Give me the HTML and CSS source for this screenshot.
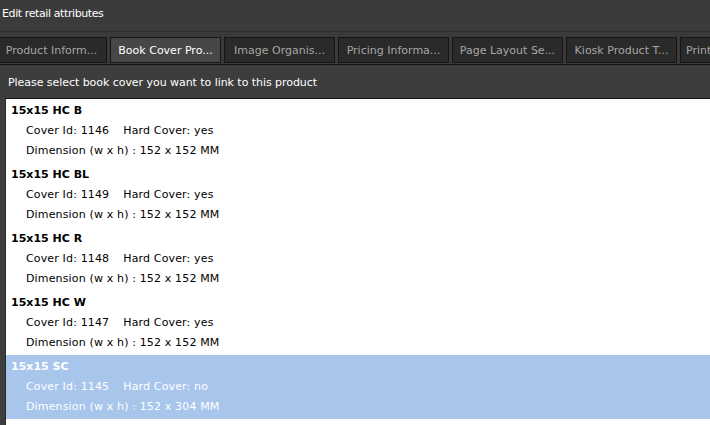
FILE: index.html
```html
<!DOCTYPE html>
<html lang="en">
<head>
    <meta charset="UTF-8">
    <title>Edit retail attributes</title>
    <link rel="stylesheet" href="styles.css">
</head>
<body>

    <!-- Window title -->
    <div class="titlebar">Edit retail attributes</div>

    <!-- Tabs -->
    <div class="tabs">
        <div class="tab">Product Inform...</div>
        <div class="tab active">Book Cover Pro...</div>
        <div class="tab">Image Organis...</div>
        <div class="tab">Pricing Informa...</div>
        <div class="tab">Page Layout Se...</div>
        <div class="tab">Kiosk Product T...</div>
        <div class="tab">Print Settings...</div>
    </div>

    <!-- Content -->
    <div class="content">
        <p class="hint">Please select book cover you want to link to this product</p>
        <div class="cover-list">
            <div class="cover">
                <div class="cover-name">15x15 HC B</div>
                <div class="cover-line">Cover Id: 1146<span class="gap"></span>Hard Cover: yes</div>
                <div class="cover-line">Dimension (w x h) : 152 x 152 MM</div>
            </div>
            <div class="cover">
                <div class="cover-name">15x15 HC BL</div>
                <div class="cover-line">Cover Id: 1149<span class="gap"></span>Hard Cover: yes</div>
                <div class="cover-line">Dimension (w x h) : 152 x 152 MM</div>
            </div>
            <div class="cover">
                <div class="cover-name">15x15 HC R</div>
                <div class="cover-line">Cover Id: 1148<span class="gap"></span>Hard Cover: yes</div>
                <div class="cover-line">Dimension (w x h) : 152 x 152 MM</div>
            </div>
            <div class="cover">
                <div class="cover-name">15x15 HC W</div>
                <div class="cover-line">Cover Id: 1147<span class="gap"></span>Hard Cover: yes</div>
                <div class="cover-line">Dimension (w x h) : 152 x 152 MM</div>
            </div>
            <div class="cover selected">
                <div class="cover-name">15x15 SC</div>
                <div class="cover-line">Cover Id: 1145<span class="gap"></span>Hard Cover: no</div>
                <div class="cover-line">Dimension (w x h) : 152 x 304 MM</div>
            </div>
        </div>
    </div>

</body>
</html>
```

FILE: styles.css
```css
body {
    margin: 0;
    padding: 0;
    height: 425px;
    overflow: hidden;
    background-color: #3d3d3d;
    font-family: 'DejaVu Sans', Verdana, sans-serif;
    font-size: 11px;
    color: #fff;
    display: flex;
    flex-direction: column;
}

.titlebar {
    height: 32px;
    padding: 7px 0 0 2px;
    box-sizing: border-box;
    line-height: 14px;
    letter-spacing: -0.4px;
    background-color: #3b3b3b;
    border-bottom: 1px solid #2c2c2c;
}

.tabs {
    display: flex;
    gap: 3px;
    padding: 5px 0 1px 0;
    background-color: #3a3a3a;
    border-bottom: 1px solid #111;
    white-space: nowrap;
    overflow: hidden;
}
.tab {
    flex: 0 0 auto;
    width: 109px;
    height: 24px;
    line-height: 25px;
    text-align: center;
    background-color: #2a2a2a;
    border: 1px solid #161616;
    color: #a6a6a6;
}
.tab:first-child {
    margin-left: -4px;
}
.tab:last-child {
    text-align: left;
    padding-left: 5px;
}
.tab.active {
    background-color: #474747;
    color: #fff;
}

.content {
    flex: 1;
    display: flex;
    flex-direction: column;
    min-height: 0;
}
.hint {
    margin: 0;
    padding: 11px 0 0 8px;
    height: 33px;
    box-sizing: border-box;
    line-height: 14px;
    letter-spacing: -0.05px;
}

.cover-list {
    flex: 1;
    margin-left: 5px;
    background-color: #fff;
    border-top: 1px solid #111;
    border-left: 1px solid #2a2a2a;
    color: #000;
}
.cover {
    height: 64px;
    padding-top: 5px;
    box-sizing: border-box;
}
.cover-name {
    font-weight: bold;
    line-height: 14px;
    padding-left: 5px;
}
.cover-line {
    line-height: 14px;
    padding: 6px 0 0 20px;
    letter-spacing: 0.15px;
}
.cover-line .gap {
    display: inline-block;
    width: 14px;
}
.cover.selected {
    background-color: #a8c5ec;
    color: #fff;
}
```
